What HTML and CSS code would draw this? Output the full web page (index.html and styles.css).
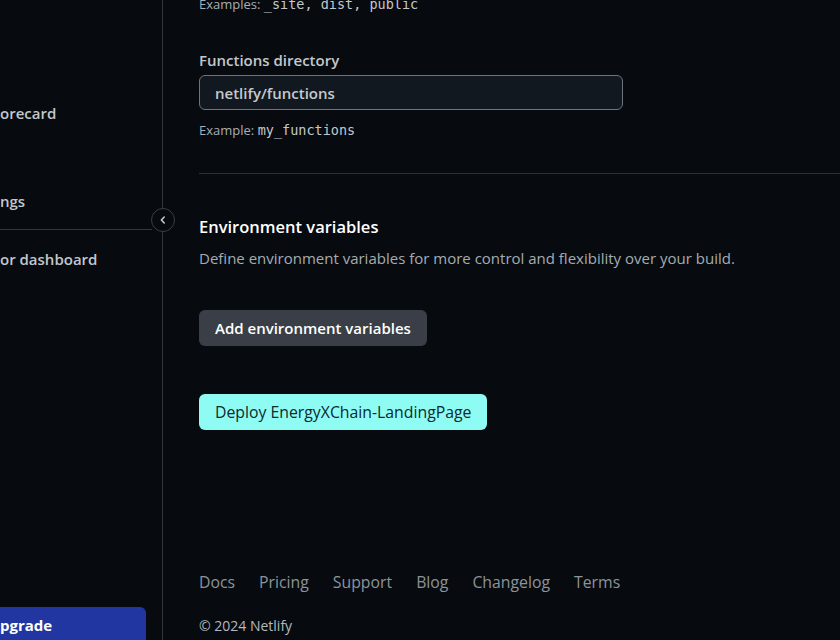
FILE: index.html
```html
<!DOCTYPE html>
<html lang="en">
<head>
<meta charset="utf-8">
<title>Deploy settings</title>
<link rel="stylesheet" href="styles.css">
</head>
<body>
<div class="app">
  <aside class="sidebar">
    <nav class="nav">
      <a class="nav-item item-scorecard">orecard</a>
      <a class="nav-item item-settings">ngs</a>
      <div class="nav-sep"></div>
      <a class="nav-item item-dashboard">or dashboard</a>
    </nav>
    <button class="upgrade">pgrade</button>
    <button class="collapse" aria-label="Collapse sidebar">
      <svg width="10" height="10" viewBox="0 0 10 10"><path d="M6.2 2 L3.4 5 L6.2 8" fill="none" stroke="#c4c8cc" stroke-width="1.6" stroke-linecap="round" stroke-linejoin="round"/></svg>
    </button>
  </aside>
  <main class="main">
    <p class="hint hint-top">Examples: <code>_site, dist, public</code></p>
    <label class="label">Functions directory</label>
    <div class="input">netlify/functions</div>
    <p class="hint hint-example">Example: <code>my_functions</code></p>
    <hr class="divider">
    <h2 class="heading">Environment variables</h2>
    <p class="desc">Define environment variables for more control and flexibility over your build.</p>
    <button class="btn btn-secondary">Add environment variables</button>
    <button class="btn btn-primary">Deploy EnergyXChain-LandingPage</button>
    <footer class="footer">
      <ul class="footer-links">
        <li>Docs</li>
        <li>Pricing</li>
        <li>Support</li>
        <li>Blog</li>
        <li>Changelog</li>
        <li>Terms</li>
      </ul>
      <p class="copyright">© 2024 Netlify</p>
    </footer>
  </main>
</div>
</body>
</html>
```
FILE: styles.css
```css
* { box-sizing: border-box; }
html, body {
  margin: 0;
  height: 640px;
  overflow: hidden;
  background: #070b10;
  font-family: "Open Sans", "Noto Sans", sans-serif;
  color: #c9ccd0;
}
.app {
  display: flex;
  height: 640px;
}
.sidebar {
  position: relative;
  width: 163px;
  flex: none;
  border-right: 1px solid #33383e;
  display: flex;
  flex-direction: column;
  justify-content: space-between;
}
.nav {
  display: flex;
  flex-direction: column;
  padding-top: 102px;
}
.nav-item {
  display: block;
  font-size: 15px;
  font-weight: 600;
  line-height: 22px;
  color: #c3c7cb;
  white-space: nowrap;
}
.item-settings { margin-top: 66px; }
.nav-sep {
  height: 1px;
  background: #33383e;
  width: 152px;
  margin-top: 17px;
}
.item-dashboard { margin-top: 18px; }
.upgrade {
  width: 146px;
  height: 40px;
  margin-bottom: -7px;
  border: 0;
  border-radius: 0 6px 6px 0;
  background: #2236a1;
  color: #ffffff;
  font-family: inherit;
  font-size: 15px;
  font-weight: 700;
  text-align: left;
  padding: 0 0 4px 0;
}
.collapse {
  position: absolute;
  top: 208px;
  right: -13px;
  width: 24px;
  height: 24px;
  border-radius: 50%;
  border: 1px solid #3a3f45;
  background: #070b10;
  padding: 0;
  display: flex;
  align-items: center;
  justify-content: center;
}
.main {
  flex: 1;
  padding-left: 36px;
  padding-top: 0;
  display: flex;
  flex-direction: column;
  align-items: flex-start;
}
.hint {
  margin: 0;
  font-size: 13px;
  line-height: 20px;
  color: #a9aeb3;
}
.hint code {
  font-family: "DejaVu Sans Mono", "Liberation Mono", monospace;
  font-size: 13.5px;
  color: #c3c7cb;
}
.hint-top { margin-top: -6px; }
.label {
  margin-top: 35px;
  font-size: 15px;
  font-weight: 600;
  line-height: 22px;
  color: #c3c7cb;
}
.input {
  margin-top: 4px;
  width: 424px;
  height: 35px;
  border: 1px solid #6e747b;
  border-radius: 6px;
  background: #111820;
  padding: 0 15px;
  display: flex;
  align-items: center;
  font-size: 15px;
  font-weight: 600;
  color: #c6c9cd;
}
.hint-example { margin-top: 10px; }
.divider {
  align-self: stretch;
  margin: 33px 0 0 0;
  border: 0;
  height: 1px;
  background: #2b3036;
}
.heading {
  margin: 41px 0 0 0;
  font-size: 16.5px;
  font-weight: 600;
  line-height: 24px;
  color: #ffffff;
}
.desc {
  margin: 8px 0 0 0;
  font-size: 15px;
  line-height: 22px;
  color: #a6abb0;
}
.btn {
  border: 0;
  border-radius: 6px;
  height: 36px;
  padding: 0 16px;
  font-family: inherit;
}
.btn-secondary {
  margin-top: 41px;
  background: #3a3f47;
  color: #ffffff;
  font-size: 15px;
  font-weight: 600;
}
.btn-primary {
  margin-top: 48px;
  background: #8ffcf4;
  color: #0a2a30;
  font-size: 15.8px;
  font-weight: 400;
}
.footer { margin-top: 141px; }
.footer-links {
  list-style: none;
  margin: 0;
  padding: 0;
  display: flex;
  gap: 24px;
  font-size: 15.8px;
  line-height: 22px;
  color: #8d939a;
}
.copyright {
  margin: 22px 0 0 0;
  font-size: 14px;
  line-height: 22px;
  color: #b4b8bd;
}
```
